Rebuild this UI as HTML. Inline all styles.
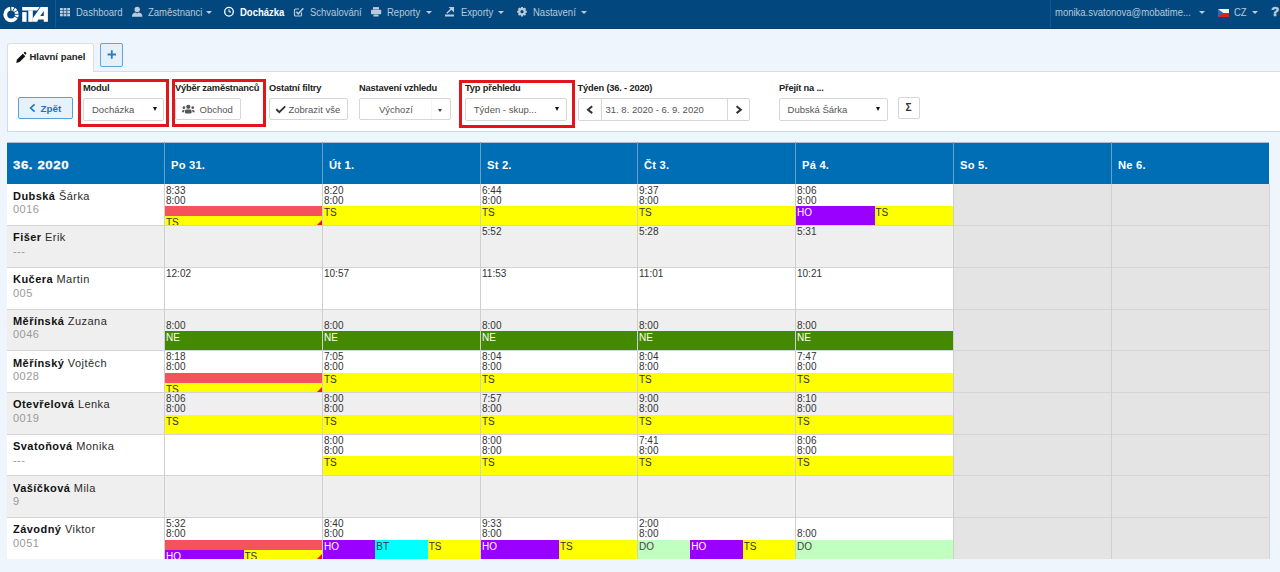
<!DOCTYPE html><html><head><meta charset="utf-8"><style>
*{box-sizing:border-box;margin:0;padding:0}
html,body{width:1280px;height:572px;overflow:hidden}
body{background:#eef5fc;font-family:"Liberation Sans",sans-serif;position:relative;color:#333}
.a{position:absolute;white-space:nowrap;line-height:1}
svg{position:absolute;overflow:visible}
.nt{color:#b8c8d9;font-size:9.5px;transform:scaleY(1.06);transform-origin:0 8px}
.caret{position:absolute;width:0;height:0;border-left:3px solid transparent;border-right:3px solid transparent;border-top:3px solid #bccbdb}
.lbl{font-size:9.3px;letter-spacing:-0.18px;font-weight:bold;color:#222}
.btn{position:absolute;border:1px solid #d6d6d6;border-radius:2px;background:#fff}
.bt{font-size:9.5px;color:#555}
.red{position:absolute;border:3px solid #e5131c}
.ht{color:#fff;font-weight:bold;font-size:11.2px;letter-spacing:0.2px}
.cell{position:absolute;overflow:hidden}
.tm{position:absolute;left:1px;font-size:10px;line-height:1;color:#333}
.bar{position:absolute;font-size:10px;line-height:1;overflow:hidden}
.bar span{position:absolute;left:1px;top:2px}
.nm{position:absolute;left:6px;font-size:11px;letter-spacing:0.45px;color:#2a2a2a;line-height:1}.nm b{color:#111}
.no{position:absolute;left:6px;font-size:11px;letter-spacing:0.45px;color:#999;line-height:1}
.tri{position:absolute;width:0;height:0;border-left:2.5px solid transparent;border-right:2.5px solid transparent;border-top:4px solid #111}
</style></head><body>
<div class="a" style="left:0;top:0;width:1280px;height:29px;background:#02487f;border-bottom:1px solid #023f72"></div>
<div class="a" style="left:55px;top:0;width:1px;height:28px;background:#14589a"></div>
<div class="a" style="left:1050px;top:0;width:1px;height:28px;background:#14589a"></div>
<svg style="left:0;top:0" width="56" height="29" viewBox="0 0 56 29">
<circle cx="11.05" cy="14.5" r="5.8" fill="none" stroke="#fff" stroke-width="3.85"/>
<line x1="10.89" y1="11.50" x2="10.61" y2="6.01" stroke="#02487f" stroke-width="1.2"/><line x1="12.41" y1="11.83" x2="14.91" y2="6.93" stroke="#02487f" stroke-width="0.9"/><line x1="13.57" y1="12.87" x2="18.18" y2="9.87" stroke="#02487f" stroke-width="0.9"/><line x1="14.05" y1="14.40" x2="19.54" y2="14.20" stroke="#02487f" stroke-width="0.9"/><line x1="13.72" y1="15.86" x2="18.62" y2="18.36" stroke="#02487f" stroke-width="0.9"/>
<path d="M22.2 7 H39.6 L37.2 10.5 H22.2Z" fill="#fff"/>
<rect x="22.2" y="12.1" width="4.4" height="9.7" fill="#fff"/>
<rect x="28.3" y="10.4" width="4.5" height="11.4" fill="#fff"/>
<path d="M32.8 21.8 V18.3 L40.6 7 H47.9 V21.8 H43.75 V19.5 H38.1 L37.3 21.8Z M40.3 16 H43.75 V11Z" fill="#fff" fill-rule="evenodd"/>
</svg>
<span class="a nt" style="left:76px;top:7.9px">Dashboard</span>
<span class="a nt" style="left:148px;top:7.9px">Zaměstnanci</span>
<span class="a nt" style="left:240px;top:7.9px;font-weight:bold;color:#fff">Docházka</span>
<span class="a nt" style="left:310px;top:7.9px">Schvalování</span>
<span class="a nt" style="left:387px;top:7.9px">Reporty</span>
<span class="a nt" style="left:461px;top:7.9px">Exporty</span>
<span class="a nt" style="left:533px;top:7.9px">Nastavení</span>
<span class="a nt" style="left:1055px;top:7.9px">monika.svatonova@mobatime...</span>
<span class="a nt" style="left:1234px;top:7.9px">CZ</span>
<div class="caret" style="left:205.5px;top:11.3px"></div>
<div class="caret" style="left:426px;top:11.3px"></div>
<div class="caret" style="left:498px;top:11.3px"></div>
<div class="caret" style="left:581px;top:11.3px"></div>
<div class="caret" style="left:1199px;top:11.3px"></div>
<div class="caret" style="left:1252px;top:11.3px"></div>
<span class="a" style="left:1271.2px;top:5.4px;font-size:13px;font-weight:bold;color:#bccbdb;-webkit-text-stroke:0.7px #bccbdb">?</span>
<svg style="left:0;top:0" width="1280" height="29"><rect x="60.0" y="8.0" width="2.8" height="2.4" fill="#bccbdb"/><rect x="60.0" y="10.9" width="2.8" height="2.4" fill="#bccbdb"/><rect x="60.0" y="13.9" width="2.8" height="2.4" fill="#bccbdb"/><rect x="63.6" y="8.0" width="2.8" height="2.4" fill="#bccbdb"/><rect x="63.6" y="10.9" width="2.8" height="2.4" fill="#bccbdb"/><rect x="63.6" y="13.9" width="2.8" height="2.4" fill="#bccbdb"/><rect x="67.2" y="8.0" width="2.8" height="2.4" fill="#bccbdb"/><rect x="67.2" y="10.9" width="2.8" height="2.4" fill="#bccbdb"/><rect x="67.2" y="13.9" width="2.8" height="2.4" fill="#bccbdb"/><circle cx="137.2" cy="9.5" r="2.7" fill="#bccbdb"/><path d="M132 16.7 C132 13.5 134 13 135.5 12.6 L137.2 13.6 L138.9 12.6 C140.4 13 142.4 13.5 142.4 16.7Z" fill="#bccbdb"/><circle cx="229" cy="11.75" r="4.3" fill="none" stroke="#fff" stroke-width="1.3"/><path d="M229 9.2 V11.9 H231" fill="none" stroke="#fff" stroke-width="1"/><path d="M301.5 12.5 V15 Q301.5 16 300.5 16 H295.5 Q294.5 16 294.5 15 V10 Q294.5 9 295.5 9 H299" fill="none" stroke="#bccbdb" stroke-width="1.2"/><path d="M296.3 11.8 L298.3 13.8 L303.3 8.3" fill="none" stroke="#bccbdb" stroke-width="1.5"/><rect x="373" y="7.1" width="6" height="2.4" fill="#bccbdb"/><rect x="371" y="9.8" width="10.2" height="4.4" rx="1" fill="#bccbdb"/><rect x="373.5" y="14.6" width="5" height="1.9" fill="#bccbdb"/><rect x="445" y="14.5" width="9" height="2" fill="#bccbdb"/><path d="M446.8 13.2 L451.5 8.8" stroke="#bccbdb" stroke-width="1.4"/><path d="M448.6 7.1 H454 V12.5Z" fill="#bccbdb"/><polygon points="525.46,10.71 526.78,10.63 526.78,12.77 525.46,12.69 525.15,13.44 526.14,14.33 524.63,15.84 523.74,14.85 522.99,15.16 523.07,16.48 520.93,16.48 521.01,15.16 520.26,14.85 519.37,15.84 517.86,14.33 518.85,13.44 518.54,12.69 517.22,12.77 517.22,10.63 518.54,10.71 518.85,9.96 517.86,9.07 519.37,7.56 520.26,8.55 521.01,8.24 520.93,6.92 523.07,6.92 522.99,8.24 523.74,8.55 524.63,7.56 526.14,9.07 525.15,9.96" fill="#bccbdb"/><circle cx="522" cy="11.7" r="3.7" fill="#bccbdb"/><circle cx="522" cy="11.7" r="1.6" fill="#02487f"/><rect x="1218" y="9" width="11" height="4" fill="#f4f4f4"/><rect x="1218" y="13" width="11" height="4" fill="#dd2211"/><path d="M1218 9 L1223.3 13 L1218 17Z" fill="#3a5fc0"/></svg>
<div class="a" style="left:7px;top:71px;width:1290px;height:61px;background:#fff;border:1px solid #c9ddf2;border-top-color:#dcdcdc"></div>
<div class="a" style="left:7px;top:43px;width:87px;height:29px;background:#fff;border:1px solid #dedede;border-bottom:none;border-radius:3px 3px 0 0"></div>
<span class="a" style="left:29.5px;top:52.3px;font-size:9.5px;font-weight:bold;color:#222">Hlavní panel</span>
<svg style="left:0;top:0" width="200" height="140"><g transform="translate(-0.6,0.9)"><path d="M16.8 62 L17.6 58.6 L23.4 52.8 L26 55.4 L20.2 61.2Z" fill="#111"/><path d="M24.2 52 L25 51.2 Q25.5 50.7 26 51.2 L26.8 52 Q27.3 52.5 26.8 53 L26 53.8Z" fill="#111"/></g></svg>
<div class="a" style="left:100px;top:43px;width:23px;height:23.5px;border:1px solid #62a5da;border-radius:2px;background:#e4f0fa"></div>
<svg style="left:0;top:0" width="200" height="140"><path d="M107.6 54.5 H116 M111.8 50.3 V58.7" stroke="#2b7cc2" stroke-width="1.8"/></svg>
<span class="a lbl" style="left:83px;top:83.6px">Modul</span>
<span class="a lbl" style="left:175px;top:83.6px">Výběr zaměstnanců</span>
<span class="a lbl" style="left:269px;top:83.6px">Ostatní filtry</span>
<span class="a lbl" style="left:359px;top:83.6px">Nastavení vzhledu</span>
<span class="a lbl" style="left:465px;top:83.6px">Typ přehledu</span>
<span class="a lbl" style="left:577.5px;top:83.6px">Týden (36. - 2020)</span>
<span class="a lbl" style="left:779px;top:83.6px">Přejít na ...</span>
<div class="btn" style="left:18px;top:97px;width:55px;height:22px;background:#e5f1fb;border-color:#55a0d8"></div>
<span class="a" style="left:40.5px;top:103.6px;font-size:9.8px;font-weight:bold;color:#1f74bd">Zpět</span>
<svg style="left:0;top:0" width="80" height="140"><path d="M34.6 104.3 L30.6 108 L34.6 111.7" fill="none" stroke="#1f74bd" stroke-width="1.6"/></svg>
<div class="btn" style="left:83px;top:98px;width:81px;height:23px;"></div>
<span class="a bt" style="left:92px;top:104.6px">Docházka</span>
<div class="tri" style="left:153.2px;top:107.2px"></div>
<div class="btn" style="left:175px;top:98px;width:66px;height:22px;"></div>
<span class="a bt" style="left:199.5px;top:104.6px">Obchod</span>
<svg style="left:0;top:0" width="260" height="140"><g fill="#555">
<circle cx="188.3" cy="106.8" r="2.1"/><rect x="185" y="109.6" width="6.6" height="4" rx="1.4"/>
<circle cx="183.9" cy="107.7" r="1.35"/><path d="M181.9 112.3 Q181.9 109.9 183.6 109.9 L184.6 109.9 Q184.1 110.8 184.1 112.3Z"/>
<circle cx="192.7" cy="107.7" r="1.35"/><path d="M194.7 112.3 Q194.7 109.9 193 109.9 L192 109.9 Q192.5 110.8 192.5 112.3Z"/>
</g></svg>
<div class="btn" style="left:268.5px;top:98px;width:79px;height:22px;"></div>
<span class="a bt" style="left:288.5px;top:104.6px">Zobrazit vše</span>
<svg style="left:0;top:0" width="360" height="140"><path d="M276.3 109.3 L279.3 112.2 L285.2 106.3" fill="none" stroke="#333" stroke-width="1.9"/></svg>
<div class="btn" style="left:358.5px;top:98px;width:92px;height:22px;"></div>
<span class="a bt" style="left:379px;top:104.6px">Výchozí</span>
<div class="a" style="left:431px;top:99px;width:1px;height:20px;background:#f5f5f5"></div>
<div class="caret" style="left:438px;top:108.6px;border-top-color:#444;border-left-width:2.7px;border-right-width:2.7px"></div>
<div class="btn" style="left:464.5px;top:98px;width:102px;height:22.5px;"></div>
<span class="a bt" style="left:473.8px;top:104.6px">Týden - skup...</span>
<div class="tri" style="left:555px;top:107.3px"></div>
<div class="btn" style="left:577.5px;top:98px;width:172.5px;height:22.5px;"></div>
<div class="a" style="left:600.5px;top:99px;width:1px;height:20.5px;background:#d6d6d6"></div>
<div class="a" style="left:726.5px;top:99px;width:1px;height:20.5px;background:#d6d6d6"></div>
<span class="a bt" style="left:605.5px;top:104.6px">31. 8. 2020 - 6. 9. 2020</span>
<svg style="left:0;top:0" width="760" height="140"><path d="M592.2 106.3 L588 109.7 L592.2 113.1 M736.6 106.3 L740.8 109.7 L736.6 113.1" fill="none" stroke="#333" stroke-width="2"/></svg>
<div class="btn" style="left:778.5px;top:98px;width:109px;height:22.5px;"></div>
<span class="a bt" style="left:787.6px;top:104.6px">Dubská Šárka</span>
<div class="tri" style="left:876.3px;top:107.3px"></div>
<div class="btn" style="left:898px;top:97px;width:22px;height:21.5px;"></div>
<span class="a" style="left:905.6px;top:102.6px;font-size:10.2px;font-weight:bold;color:#333">&Sigma;</span>
<div class="red" style="left:78px;top:78.6px;width:91px;height:48.6px"></div>
<div class="red" style="left:171.7px;top:78.8px;width:94.3px;height:48.7px"></div>
<div class="red" style="left:459px;top:80px;width:116px;height:48px"></div>
<div class="a" style="left:7px;top:143px;width:1262px;height:41px;background:#006eb4"></div>
<div class="a" style="left:7px;top:142px;width:1262px;height:1px;background:#aebfcf"></div>
<span class="a ht" style="left:13px;top:158.6px;font-size:13.2px;letter-spacing:0.6px;transform:scaleY(0.88);transform-origin:0 0;-webkit-text-stroke:0.3px #fff">36. 2020</span>
<div class="a" style="left:164px;top:142px;width:1px;height:42px;background:#6c9fc6"></div>
<span class="a ht" style="left:171px;top:160.4px">Po 31.</span>
<div class="a" style="left:322px;top:142px;width:1px;height:42px;background:#6c9fc6"></div>
<span class="a ht" style="left:329px;top:160.4px">Út 1.</span>
<div class="a" style="left:480px;top:142px;width:1px;height:42px;background:#6c9fc6"></div>
<span class="a ht" style="left:487px;top:160.4px">St 2.</span>
<div class="a" style="left:637px;top:142px;width:1px;height:42px;background:#6c9fc6"></div>
<span class="a ht" style="left:644px;top:160.4px">Čt 3.</span>
<div class="a" style="left:795px;top:142px;width:1px;height:42px;background:#6c9fc6"></div>
<span class="a ht" style="left:802px;top:160.4px">Pá 4.</span>
<div class="a" style="left:953px;top:142px;width:1px;height:42px;background:#6c9fc6"></div>
<span class="a ht" style="left:960px;top:160.4px">So 5.</span>
<div class="a" style="left:1111px;top:142px;width:1px;height:42px;background:#6c9fc6"></div>
<span class="a ht" style="left:1118px;top:160.4px">Ne 6.</span>
<div class="a" style="left:7px;top:184px;width:1262px;height:41px;background:#fff"></div>
<div class="a" style="left:953px;top:184px;width:316px;height:41px;background:#e4e4e4"></div>
<div class="a" style="left:7px;top:225px;width:1262px;height:1px;background:#d4d4d4"></div>
<span class="nm" style="left:13px;top:190.70px"><b>Dubská</b> Šárka</span>
<span class="no" style="left:13px;top:204.30px">0016</span>
<div class="cell" style="left:165px;top:184px;width:157px;height:41px">
<span class="tm" style="top:1.60px">8:33</span>
<span class="tm" style="top:11.60px">8:00</span>
<div class="bar" style="left:0;top:22px;width:157px;height:10px;background:#f4535b"></div>
<div class="bar" style="left:0.00px;top:32px;width:157.00px;height:19px;background:#ffff00;color:#333"><span>TS</span></div>
<div class="a" style="right:0;bottom:0;width:0;height:0;border-left:5px solid transparent;border-bottom:5px solid #ff0a0a"></div>
</div>
<div class="cell" style="left:323px;top:184px;width:157px;height:41px">
<span class="tm" style="top:1.60px">8:20</span>
<span class="tm" style="top:11.60px">8:00</span>
<div class="bar" style="left:0.00px;top:22px;width:157.00px;height:19px;background:#ffff00;color:#333"><span>TS</span></div>
</div>
<div class="cell" style="left:481px;top:184px;width:156px;height:41px">
<span class="tm" style="top:1.60px">6:44</span>
<span class="tm" style="top:11.60px">8:00</span>
<div class="bar" style="left:0.00px;top:22px;width:156.00px;height:19px;background:#ffff00;color:#333"><span>TS</span></div>
</div>
<div class="cell" style="left:638px;top:184px;width:157px;height:41px">
<span class="tm" style="top:1.60px">9:37</span>
<span class="tm" style="top:11.60px">8:00</span>
<div class="bar" style="left:0.00px;top:22px;width:157.00px;height:19px;background:#ffff00;color:#333"><span>TS</span></div>
</div>
<div class="cell" style="left:796px;top:184px;width:157px;height:41px">
<span class="tm" style="top:1.60px">8:06</span>
<span class="tm" style="top:11.60px">8:00</span>
<div class="bar" style="left:0.00px;top:22px;width:78.50px;height:19px;background:#9900ff;color:#fff"><span>HO</span></div>
<div class="bar" style="left:78.50px;top:22px;width:78.50px;height:19px;background:#ffff00;color:#333"><span>TS</span></div>
</div>
<div class="a" style="left:7px;top:226px;width:1262px;height:41px;background:#efefef"></div>
<div class="a" style="left:953px;top:226px;width:316px;height:41px;background:#e4e4e4"></div>
<div class="a" style="left:7px;top:267px;width:1262px;height:1px;background:#d4d4d4"></div>
<span class="nm" style="left:13px;top:232.41px"><b>Fišer</b> Erik</span>
<span class="no" style="left:13px;top:246.01px">---</span>
<div class="cell" style="left:165px;top:226px;width:157px;height:41px">
</div>
<div class="cell" style="left:323px;top:226px;width:157px;height:41px">
</div>
<div class="cell" style="left:481px;top:226px;width:156px;height:41px">
<span class="tm" style="top:1.31px">5:52</span>
</div>
<div class="cell" style="left:638px;top:226px;width:157px;height:41px">
<span class="tm" style="top:1.31px">5:28</span>
</div>
<div class="cell" style="left:796px;top:226px;width:157px;height:41px">
<span class="tm" style="top:1.31px">5:31</span>
</div>
<div class="a" style="left:7px;top:268px;width:1262px;height:41px;background:#fff"></div>
<div class="a" style="left:953px;top:268px;width:316px;height:41px;background:#e4e4e4"></div>
<div class="a" style="left:7px;top:309px;width:1262px;height:1px;background:#d4d4d4"></div>
<span class="nm" style="left:13px;top:274.12px"><b>Kučera</b> Martin</span>
<span class="no" style="left:13px;top:287.72px">005</span>
<div class="cell" style="left:165px;top:268px;width:157px;height:41px">
<span class="tm" style="top:1.02px">12:02</span>
</div>
<div class="cell" style="left:323px;top:268px;width:157px;height:41px">
<span class="tm" style="top:1.02px">10:57</span>
</div>
<div class="cell" style="left:481px;top:268px;width:156px;height:41px">
<span class="tm" style="top:1.02px">11:53</span>
</div>
<div class="cell" style="left:638px;top:268px;width:157px;height:41px">
<span class="tm" style="top:1.02px">11:01</span>
</div>
<div class="cell" style="left:796px;top:268px;width:157px;height:41px">
<span class="tm" style="top:1.02px">10:21</span>
</div>
<div class="a" style="left:7px;top:310px;width:1262px;height:40px;background:#efefef"></div>
<div class="a" style="left:953px;top:310px;width:316px;height:40px;background:#e4e4e4"></div>
<div class="a" style="left:7px;top:350px;width:1262px;height:1px;background:#d4d4d4"></div>
<span class="nm" style="left:13px;top:315.83px"><b>Měřínská</b> Zuzana</span>
<span class="no" style="left:13px;top:329.43px">0046</span>
<div class="cell" style="left:165px;top:310px;width:157px;height:40px">
<span class="tm" style="top:10.73px">8:00</span>
<div class="bar" style="left:0.00px;top:21px;width:157.00px;height:19px;background:#448a00;color:#fff"><span>NE</span></div>
</div>
<div class="cell" style="left:323px;top:310px;width:157px;height:40px">
<span class="tm" style="top:10.73px">8:00</span>
<div class="bar" style="left:0.00px;top:21px;width:157.00px;height:19px;background:#448a00;color:#fff"><span>NE</span></div>
</div>
<div class="cell" style="left:481px;top:310px;width:156px;height:40px">
<span class="tm" style="top:10.73px">8:00</span>
<div class="bar" style="left:0.00px;top:21px;width:156.00px;height:19px;background:#448a00;color:#fff"><span>NE</span></div>
</div>
<div class="cell" style="left:638px;top:310px;width:157px;height:40px">
<span class="tm" style="top:10.73px">8:00</span>
<div class="bar" style="left:0.00px;top:21px;width:157.00px;height:19px;background:#448a00;color:#fff"><span>NE</span></div>
</div>
<div class="cell" style="left:796px;top:310px;width:157px;height:40px">
<span class="tm" style="top:10.73px">8:00</span>
<div class="bar" style="left:0.00px;top:21px;width:157.00px;height:19px;background:#448a00;color:#fff"><span>NE</span></div>
</div>
<div class="a" style="left:7px;top:351px;width:1262px;height:41px;background:#fff"></div>
<div class="a" style="left:953px;top:351px;width:316px;height:41px;background:#e4e4e4"></div>
<div class="a" style="left:7px;top:392px;width:1262px;height:1px;background:#d4d4d4"></div>
<span class="nm" style="left:13px;top:357.54px"><b>Měřínský</b> Vojtěch</span>
<span class="no" style="left:13px;top:371.14px">0028</span>
<div class="cell" style="left:165px;top:351px;width:157px;height:41px">
<span class="tm" style="top:1.44px">8:18</span>
<span class="tm" style="top:11.44px">8:00</span>
<div class="bar" style="left:0;top:22px;width:157px;height:10px;background:#f4535b"></div>
<div class="bar" style="left:0.00px;top:32px;width:157.00px;height:19px;background:#ffff00;color:#333"><span>TS</span></div>
<div class="a" style="right:0;bottom:0;width:0;height:0;border-left:5px solid transparent;border-bottom:5px solid #ff0a0a"></div>
</div>
<div class="cell" style="left:323px;top:351px;width:157px;height:41px">
<span class="tm" style="top:1.44px">7:05</span>
<span class="tm" style="top:11.44px">8:00</span>
<div class="bar" style="left:0.00px;top:22px;width:157.00px;height:19px;background:#ffff00;color:#333"><span>TS</span></div>
</div>
<div class="cell" style="left:481px;top:351px;width:156px;height:41px">
<span class="tm" style="top:1.44px">8:04</span>
<span class="tm" style="top:11.44px">8:00</span>
<div class="bar" style="left:0.00px;top:22px;width:156.00px;height:19px;background:#ffff00;color:#333"><span>TS</span></div>
</div>
<div class="cell" style="left:638px;top:351px;width:157px;height:41px">
<span class="tm" style="top:1.44px">8:04</span>
<span class="tm" style="top:11.44px">8:00</span>
<div class="bar" style="left:0.00px;top:22px;width:157.00px;height:19px;background:#ffff00;color:#333"><span>TS</span></div>
</div>
<div class="cell" style="left:796px;top:351px;width:157px;height:41px">
<span class="tm" style="top:1.44px">7:47</span>
<span class="tm" style="top:11.44px">8:00</span>
<div class="bar" style="left:0.00px;top:22px;width:157.00px;height:19px;background:#ffff00;color:#333"><span>TS</span></div>
</div>
<div class="a" style="left:7px;top:393px;width:1262px;height:41px;background:#efefef"></div>
<div class="a" style="left:953px;top:393px;width:316px;height:41px;background:#e4e4e4"></div>
<div class="a" style="left:7px;top:434px;width:1262px;height:1px;background:#d4d4d4"></div>
<span class="nm" style="left:13px;top:399.25px"><b>Otevřelová</b> Lenka</span>
<span class="no" style="left:13px;top:412.85px">0019</span>
<div class="cell" style="left:165px;top:393px;width:157px;height:41px">
<span class="tm" style="top:1.15px">8:06</span>
<span class="tm" style="top:11.15px">8:00</span>
<div class="bar" style="left:0.00px;top:22px;width:157.00px;height:19px;background:#ffff00;color:#333"><span>TS</span></div>
</div>
<div class="cell" style="left:323px;top:393px;width:157px;height:41px">
<span class="tm" style="top:1.15px">8:00</span>
<span class="tm" style="top:11.15px">8:00</span>
<div class="bar" style="left:0.00px;top:22px;width:157.00px;height:19px;background:#ffff00;color:#333"><span>TS</span></div>
</div>
<div class="cell" style="left:481px;top:393px;width:156px;height:41px">
<span class="tm" style="top:1.15px">7:57</span>
<span class="tm" style="top:11.15px">8:00</span>
<div class="bar" style="left:0.00px;top:22px;width:156.00px;height:19px;background:#ffff00;color:#333"><span>TS</span></div>
</div>
<div class="cell" style="left:638px;top:393px;width:157px;height:41px">
<span class="tm" style="top:1.15px">9:00</span>
<span class="tm" style="top:11.15px">8:00</span>
<div class="bar" style="left:0.00px;top:22px;width:157.00px;height:19px;background:#ffff00;color:#333"><span>TS</span></div>
</div>
<div class="cell" style="left:796px;top:393px;width:157px;height:41px">
<span class="tm" style="top:1.15px">8:10</span>
<span class="tm" style="top:11.15px">8:00</span>
<div class="bar" style="left:0.00px;top:22px;width:157.00px;height:19px;background:#ffff00;color:#333"><span>TS</span></div>
</div>
<div class="a" style="left:7px;top:435px;width:1262px;height:40px;background:#fff"></div>
<div class="a" style="left:953px;top:435px;width:316px;height:40px;background:#e4e4e4"></div>
<div class="a" style="left:7px;top:475px;width:1262px;height:1px;background:#d4d4d4"></div>
<span class="nm" style="left:13px;top:440.96px"><b>Svatoňová</b> Monika</span>
<span class="no" style="left:13px;top:454.56px">---</span>
<div class="cell" style="left:165px;top:435px;width:157px;height:40px">
</div>
<div class="cell" style="left:323px;top:435px;width:157px;height:40px">
<span class="tm" style="top:0.86px">8:00</span>
<span class="tm" style="top:10.86px">8:00</span>
<div class="bar" style="left:0.00px;top:21px;width:157.00px;height:19px;background:#ffff00;color:#333"><span>TS</span></div>
</div>
<div class="cell" style="left:481px;top:435px;width:156px;height:40px">
<span class="tm" style="top:0.86px">8:00</span>
<span class="tm" style="top:10.86px">8:00</span>
<div class="bar" style="left:0.00px;top:21px;width:156.00px;height:19px;background:#ffff00;color:#333"><span>TS</span></div>
</div>
<div class="cell" style="left:638px;top:435px;width:157px;height:40px">
<span class="tm" style="top:0.86px">7:41</span>
<span class="tm" style="top:10.86px">8:00</span>
<div class="bar" style="left:0.00px;top:21px;width:157.00px;height:19px;background:#ffff00;color:#333"><span>TS</span></div>
</div>
<div class="cell" style="left:796px;top:435px;width:157px;height:40px">
<span class="tm" style="top:0.86px">8:06</span>
<span class="tm" style="top:10.86px">8:00</span>
<div class="bar" style="left:0.00px;top:21px;width:157.00px;height:19px;background:#ffff00;color:#333"><span>TS</span></div>
</div>
<div class="a" style="left:7px;top:476px;width:1262px;height:41px;background:#efefef"></div>
<div class="a" style="left:953px;top:476px;width:316px;height:41px;background:#e4e4e4"></div>
<div class="a" style="left:7px;top:517px;width:1262px;height:1px;background:#d4d4d4"></div>
<span class="nm" style="left:13px;top:482.67px"><b>Vašíčková</b> Mila</span>
<span class="no" style="left:13px;top:496.27px">9</span>
<div class="cell" style="left:165px;top:476px;width:157px;height:41px">
</div>
<div class="cell" style="left:323px;top:476px;width:157px;height:41px">
</div>
<div class="cell" style="left:481px;top:476px;width:156px;height:41px">
</div>
<div class="cell" style="left:638px;top:476px;width:157px;height:41px">
</div>
<div class="cell" style="left:796px;top:476px;width:157px;height:41px">
</div>
<div class="a" style="left:7px;top:518px;width:1262px;height:41px;background:#fff"></div>
<div class="a" style="left:953px;top:518px;width:316px;height:41px;background:#e4e4e4"></div>
<span class="nm" style="left:13px;top:524.38px"><b>Závodný</b> Viktor</span>
<span class="no" style="left:13px;top:537.98px">0051</span>
<div class="cell" style="left:165px;top:518px;width:157px;height:41px">
<span class="tm" style="top:1.28px">5:32</span>
<span class="tm" style="top:11.28px">8:00</span>
<div class="bar" style="left:0;top:22px;width:157px;height:10px;background:#f4535b"></div>
<div class="bar" style="left:0.00px;top:32px;width:78.50px;height:19px;background:#9900ff;color:#fff"><span>HO</span></div>
<div class="bar" style="left:78.50px;top:32px;width:78.50px;height:19px;background:#ffff00;color:#333"><span>TS</span></div>
<div class="a" style="right:0;bottom:0;width:0;height:0;border-left:5px solid transparent;border-bottom:5px solid #ff0a0a"></div>
</div>
<div class="cell" style="left:323px;top:518px;width:157px;height:41px">
<span class="tm" style="top:1.28px">8:40</span>
<span class="tm" style="top:11.28px">8:00</span>
<div class="bar" style="left:0.00px;top:22px;width:52.33px;height:19px;background:#9900ff;color:#fff"><span>HO</span></div>
<div class="bar" style="left:52.33px;top:22px;width:52.33px;height:19px;background:#00ffff;color:#333"><span>BT</span></div>
<div class="bar" style="left:104.67px;top:22px;width:52.33px;height:19px;background:#ffff00;color:#333"><span>TS</span></div>
</div>
<div class="cell" style="left:481px;top:518px;width:156px;height:41px">
<span class="tm" style="top:1.28px">9:33</span>
<span class="tm" style="top:11.28px">8:00</span>
<div class="bar" style="left:0.00px;top:22px;width:78.00px;height:19px;background:#9900ff;color:#fff"><span>HO</span></div>
<div class="bar" style="left:78.00px;top:22px;width:78.00px;height:19px;background:#ffff00;color:#333"><span>TS</span></div>
</div>
<div class="cell" style="left:638px;top:518px;width:157px;height:41px">
<span class="tm" style="top:1.28px">2:00</span>
<span class="tm" style="top:11.28px">8:00</span>
<div class="bar" style="left:0.00px;top:22px;width:52.33px;height:19px;background:#c0ffc0;color:#444"><span>DO</span></div>
<div class="bar" style="left:52.33px;top:22px;width:52.33px;height:19px;background:#9900ff;color:#fff"><span>HO</span></div>
<div class="bar" style="left:104.67px;top:22px;width:52.33px;height:19px;background:#ffff00;color:#333"><span>TS</span></div>
</div>
<div class="cell" style="left:796px;top:518px;width:157px;height:41px">
<span class="tm" style="top:11.28px">8:00</span>
<div class="bar" style="left:0.00px;top:22px;width:157.00px;height:19px;background:#c0ffc0;color:#444"><span>DO</span></div>
</div>
<div class="a" style="left:164px;top:184px;width:1px;height:375px;background:#cfcfcf"></div>
<div class="a" style="left:322px;top:184px;width:1px;height:375px;background:#cfcfcf"></div>
<div class="a" style="left:480px;top:184px;width:1px;height:375px;background:#cfcfcf"></div>
<div class="a" style="left:637px;top:184px;width:1px;height:375px;background:#cfcfcf"></div>
<div class="a" style="left:795px;top:184px;width:1px;height:375px;background:#cfcfcf"></div>
<div class="a" style="left:953px;top:184px;width:1px;height:375px;background:#cfcfcf"></div>
<div class="a" style="left:1111px;top:184px;width:1px;height:375px;background:#cfcfcf"></div>
<div class="a" style="left:1269px;top:184px;width:1px;height:375px;background:#d4d4d4"></div>
</body></html>
